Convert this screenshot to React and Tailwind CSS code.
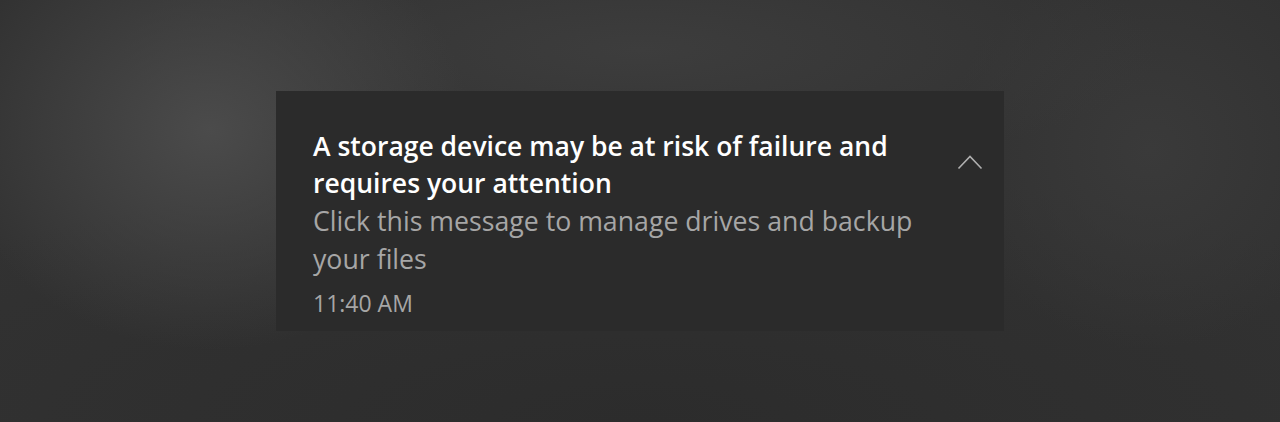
export default function App() {
  return (
    <div className="h-[422px] w-full flex items-center justify-center bg-[#323232] bg-[radial-gradient(ellipse_260px_220px_at_210px_130px,#4b4b4b,transparent),radial-gradient(ellipse_520px_130px_at_640px_50px,#3d3d3d,transparent),radial-gradient(ellipse_200px_200px_at_1150px_150px,#3a3a3a,transparent),radial-gradient(ellipse_900px_260px_at_640px_422px,#2c2c2c,transparent)]">
      <div className="w-[728px] h-[240px] bg-[#2b2b2b] flex font-['Open_Sans',sans-serif]">
        <div className="flex-1 pl-[37px] pt-[37px]">
          <div className="text-[26.5px] leading-[37px] font-semibold text-white">
            <div className="whitespace-nowrap">A storage device may be at risk of failure and</div>
            <div className="whitespace-nowrap">requires your attention</div>
          </div>
          <div className="text-[26.7px] leading-[38px] text-[#a6a6a6]">
            <div className="whitespace-nowrap">Click this message to manage drives and backup</div>
            <div className="whitespace-nowrap">your files</div>
          </div>
          <div className="mt-[10px] text-[23px] leading-[30px] text-[#a6a6a6]">11:40 AM</div>
        </div>
        <div className="pt-[63px] pr-[21px]">
          <svg width="26" height="16" viewBox="0 0 26 16" fill="none">
            <path d="M1.5 14.5 L13 2.5 L24.5 14.5" stroke="#b0b0b0" strokeWidth="1.6" />
          </svg>
        </div>
      </div>
    </div>
  );
}
